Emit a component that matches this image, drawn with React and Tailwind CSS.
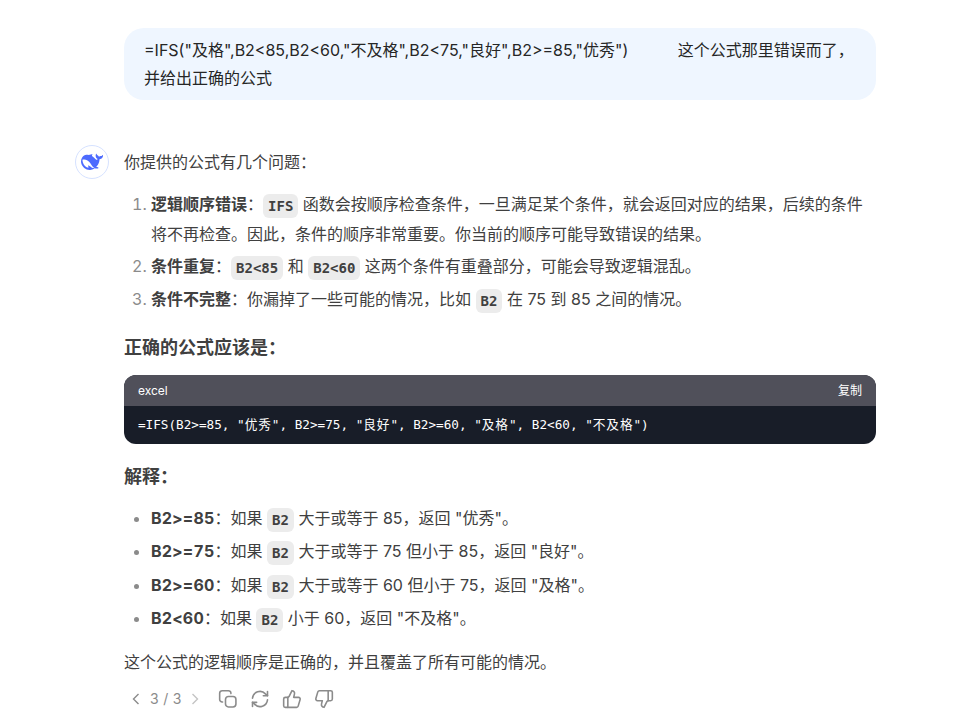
import React from "react";

const Code = ({ children }) => (
  <code className="inline-block h-[24px] leading-[24px] px-[5px] rounded-md bg-[#ececec] text-[14px] font-bold align-[-1px] font-['DejaVu_Sans_Mono',monospace]">
    {children}
  </code>
);

const Cjk = ({ children }) => <span className="tracking-[0.9px]">{children}</span>;

const bullets = [
  ["B2>=85", "大于或等于 85，返回 \"优秀\"。"],
  ["B2>=75", "大于或等于 75 但小于 85，返回 \"良好\"。"],
  ["B2>=60", "大于或等于 60 但小于 75，返回 \"及格\"。"],
  ["B2<60", "小于 60，返回 \"不及格\"。"],
];

function Whale() {
  return (
    <svg viewBox="0 0 24 24" className="w-[22px] h-[22px]" fill="#4d6bfe">
      <path
        fillRule="evenodd"
        d="M23.748 4.482c-.254-.124-.364.113-.512.234-.051.039-.094.09-.137.136-.372.397-.806.657-1.373.626-.829-.046-1.537.214-2.163.848-.133-.782-.575-1.248-1.247-1.548-.352-.156-.708-.311-.955-.65-.172-.241-.219-.51-.305-.774-.055-.16-.11-.323-.293-.35-.2-.031-.278.136-.356.276-.313.572-.434 1.202-.422 1.84.027 1.436.633 2.58 1.838 3.393.137.093.172.187.129.323-.082.28-.18.552-.266.833-.055.179-.137.217-.329.14a5.526 5.526 0 01-1.736-1.18c-.857-.828-1.631-1.742-2.597-2.458a11.365 11.365 0 00-.689-.471c-.985-.957.13-1.743.388-1.836.27-.098.093-.432-.779-.428-.872.004-1.67.295-2.687.684a3.055 3.055 0 01-.465.137 9.597 9.597 0 00-2.883-.102c-1.885.21-3.39 1.102-4.497 2.623C.082 8.606-.231 10.684.152 12.85c.403 2.284 1.569 4.175 3.36 5.653 1.858 1.533 3.997 2.284 6.438 2.14 1.482-.085 3.133-.284 4.994-1.86.47.234.962.327 1.78.397.63.059 1.236-.03 1.705-.128.735-.156.684-.837.419-.961-2.155-1.004-1.682-.595-2.113-.926 1.096-1.296 2.746-2.642 3.392-7.003.05-.347.007-.565 0-.845-.004-.17.035-.237.23-.256a4.173 4.173 0 001.545-.475c1.396-.763 1.96-2.015 2.093-3.517.02-.23-.004-.467-.247-.588zM11.581 18c-2.089-1.642-3.102-2.183-3.52-2.16-.392.024-.321.471-.235.763.09.288.207.486.371.739.114.167.192.416-.113.603-.673.416-1.842-.14-1.897-.167-1.361-.802-2.5-1.86-3.301-3.307-.774-1.393-1.224-2.887-1.298-4.482-.02-.386.093-.522.477-.592a4.696 4.696 0 011.529-.039c2.132.312 3.946 1.265 5.468 2.774.868.86 1.525 1.887 2.202 2.891.72 1.066 1.494 2.082 2.48 2.914.348.292.625.514.891.677-.802.09-2.14.11-3.054-.614z"
      />
    </svg>
  );
}

const Icon = ({ children }) => (
  <svg viewBox="0 0 24 24" fill="none" stroke="#8b8b8b" strokeWidth="1.9" strokeLinecap="round" strokeLinejoin="round" className="w-[20px] h-[20px]">
    {children}
  </svg>
);

export default function App() {
  return (
    <div className="min-h-screen w-full bg-white text-[#404040] text-[16px] leading-[28px] font-['Inter','Noto_Sans_CJK_SC',sans-serif] overflow-hidden">
      <div className="w-[752px] ml-[124px] pt-[28px]">
        <div className="bg-[#eff6ff] rounded-[20px] px-5 py-2 text-[#262626] whitespace-pre-wrap">
          {"=IFS(\"及格\",B2<85,B2<60,\"不及格\",B2<75,\"良好\",B2>=85,\"优秀\")           这个公式那里错误而了，并给出正确的公式"}
        </div>

        <div className="relative mt-[48px]">
          <div className="absolute left-[-49px] top-[-3px] w-[34px] h-[34px] rounded-full bg-white border border-[#d6e2ff] flex items-center justify-center">
            <Whale />
          </div>
          <p>你提供的公式有几个问题：</p>

          <ol className="mt-[13px] pl-[27px] list-decimal marker:text-[#8b8b8b]">
            <li className="leading-[30px]">
              <strong>逻辑顺序错误</strong>：<Code>IFS</Code> 函数会按顺序检查条件，一旦满足某个条件，就会返回对应的结果，后续的条件将不再检查。因此，条件的顺序非常重要。你当前的顺序可能导致错误的结果。
            </li>
            <li className="mt-[2px] leading-[30px]">
              <strong>条件重复</strong>：<Code>B2&lt;85</Code> 和 <Code>B2&lt;60</Code> 这两个条件有重叠部分，可能会导致逻辑混乱。
            </li>
            <li className="mt-[3px] leading-[30px]">
              <strong>条件不完整</strong>：你漏掉了一些可能的情况，比如 <Code>B2</Code> 在 75 到 85 之间的情况。
            </li>
          </ol>

          <h3 className="mt-[20px] text-[18px] font-bold">正确的公式应该是：</h3>

          <div className="mt-[13px] rounded-[12px] overflow-hidden bg-[#181d28] text-white">
            <div className="h-[31px] bg-[#50505a] px-[14px] flex items-center justify-between text-[12px]">
              <span>excel</span>
              <span>复制</span>
            </div>
            <pre className="h-[38px] px-[14px] text-[12.67px] leading-[38px] font-['DejaVu_Sans_Mono','Noto_Sans_CJK_SC',monospace]">
              =IFS(B2&gt;=85, "<Cjk>优秀</Cjk>", B2&gt;=75, "<Cjk>良好</Cjk>", B2&gt;=60, "<Cjk>及格</Cjk>", B2&lt;60, "<Cjk>不及格</Cjk>")
            </pre>
          </div>

          <h3 className="mt-[19px] text-[18px] font-bold">解释：</h3>

          <ul className="mt-[11px] pl-[27px] list-disc marker:text-[#8b8b8b]">
            {bullets.map(([k, v]) => (
              <li key={k} className="h-[33.3px] leading-[33px]">
                <strong className="tracking-[0.2px] tabular-nums">{k}</strong>：如果 <Code>B2</Code> {v}
              </li>
            ))}
          </ul>

          <p className="mt-[13px]">这个公式的逻辑顺序是正确的，并且覆盖了所有可能的情况。</p>

          <div className="mt-[9px] flex items-center text-[14px] text-[#8b8b8b]">
            <svg viewBox="0 0 10 14" className="w-[10px] h-[14px] ml-[7px]" fill="none" stroke="#8b8b8b" strokeWidth="1.4"><path d="M7.5 2 2.5 7l5 5" /></svg>
            <span className="ml-[9px] tracking-[0.3px]">3 / 3</span>
            <svg viewBox="0 0 10 14" className="w-[10px] h-[14px] ml-[8px]" fill="none" stroke="#c4c4c4" strokeWidth="1.4"><path d="m2.5 2 5 5-5 5" /></svg>
            <div className="ml-[18px] flex items-center gap-[12px]">
              <Icon>
                <rect x="9" y="9" width="12.5" height="12.5" rx="3.5" />
                <path d="M15.5 5.5V5a3 3 0 0 0-3-3H5a3 3 0 0 0-3 3v7.5a3 3 0 0 0 3 3h.5" />
              </Icon>
              <Icon>
                <path d="M3 11a9 9 0 0 1 15.5-5.2L21 8" />
                <path d="M21 3v5h-5" />
                <path d="M21 13a9 9 0 0 1-15.5 5.2L3 16" />
                <path d="M3 21v-5h5" />
              </Icon>
              <Icon>
                <path d="M7 10v12" />
                <path d="M15 5.88 14 10h5.83a2 2 0 0 1 1.92 2.56l-2.33 8A2 2 0 0 1 17.5 22H4a2 2 0 0 1-2-2v-8a2 2 0 0 1 2-2h2.76a2 2 0 0 0 1.79-1.11L12 2a3.13 3.13 0 0 1 3 3.88Z" />
              </Icon>
              <Icon>
                <path d="M17 14V2" />
                <path d="M9 18.12 10 14H4.17a2 2 0 0 1-1.92-2.56l2.33-8A2 2 0 0 1 6.5 2H20a2 2 0 0 1 2 2v8a2 2 0 0 1-2 2h-2.76a2 2 0 0 0-1.79 1.11L12 22a3.13 3.13 0 0 1-3-3.88Z" />
              </Icon>
            </div>
          </div>
        </div>
      </div>
    </div>
  );
}
